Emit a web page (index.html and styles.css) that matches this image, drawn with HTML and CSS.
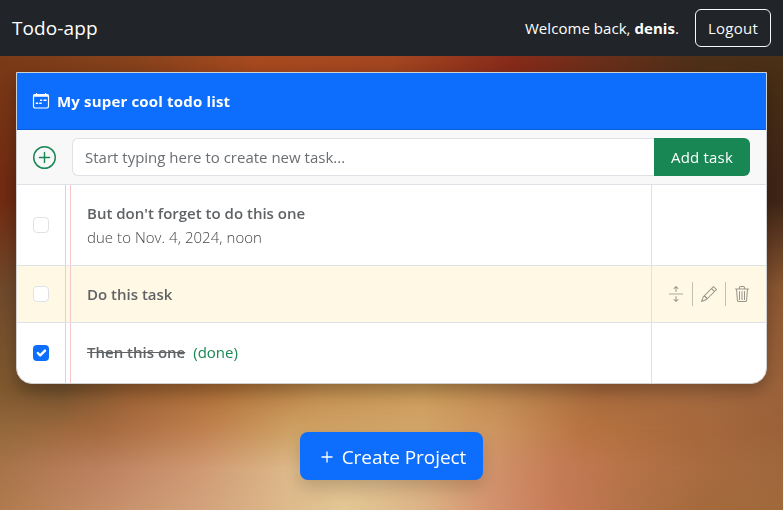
FILE: index.html
```html
<!DOCTYPE html>
<html lang="en">
<head>
<meta charset="utf-8">
<title>Todo-app</title>
<link rel="stylesheet" href="styles.css">
</head>
<body>
<div class="backdrop">
  <div class="band b1"></div>
  <div class="band b2"></div>
  <div class="band b3"></div>
  <div class="band b4"></div>
  <div class="band b5"></div>
  <div class="band b6"></div>
  <div class="band b7"></div>
</div>
<nav class="navbar">
  <a class="brand">Todo-app</a>
  <span class="welcome">Welcome back, <b>denis</b>.</span>
  <button class="logout">Logout</button>
</nav>
<main>
  <section class="card">
    <header class="card-head">
      <svg width="18" height="18" viewBox="0 0 18 18" fill="none" stroke="currentColor"><rect x="1.500" y="2.500" width="15" height="13.500" rx="1.700" stroke-width="1.200"/><path d="M1.500 3.700h15" stroke-width="2.200"/><path d="M4.500 1v2M13.500 1v2" stroke-width="1.200"/><path d="M8 8.200h2.200M11.500 8.200h3M3.800 11.200h2.400M7.200 11.200h2.500" stroke-width="1.500"/></svg>
      <h2>My super cool todo list</h2>
    </header>
    <form class="add-row">
      <svg width="23" height="23" viewBox="0 0 16 16" fill="currentColor"><path d="M8 15A7 7 0 1 1 8 1a7 7 0 0 1 0 14m0 1A8 8 0 1 0 8 0a8 8 0 0 0 0 16"/><path d="M8 4a.5.5 0 0 1 .5.5v3h3a.5.5 0 0 1 0 1h-3v3a.5.5 0 0 1-1 0v-3h-3a.5.5 0 0 1 0-1h3v-3A.5.5 0 0 1 8 4"/></svg>
      <input class="task-input" type="text" placeholder="Start typing here to create new task...">
      <button class="add-btn" type="button">Add task</button>
    </form>
    <div class="task tall">
      <div class="check-cell"><span class="check"></span></div>
      <div class="gutter"></div>
      <div class="body"><div class="name">But don't forget to do this one</div><div class="due">due to Nov. 4, 2024, noon</div></div>
      <div class="actions"></div>
    </div>
    <div class="task hover">
      <div class="check-cell"><span class="check"></span></div>
      <div class="gutter"></div>
      <div class="body"><div class="name">Do this task</div></div>
      <div class="actions">
        <svg width="16" height="16" viewBox="0 0 16 16" fill="currentColor"><path d="M8.354.146a.5.5 0 0 0-.708 0l-2 2a.5.5 0 1 0 .708.708L7.500 1.707V5.500a.5.5 0 0 0 1 0V1.707l1.146 1.147a.5.5 0 0 0 .708-.708zM8 10a.5.5 0 0 1 .5.5v3.793l1.146-1.147a.5.5 0 0 1 .708.708l-2 2a.5.5 0 0 1-.708 0l-2-2a.5.5 0 0 1 .708-.708L7.500 14.293V10.500A.5.5 0 0 1 8 10"/><path class="faint" d="M1 7h14v2H1z"/></svg>
        <i class="sep"></i>
        <svg width="16" height="16" viewBox="0 0 16 16" fill="currentColor"><path d="M12.146.146a.5.5 0 0 1 .708 0l3 3a.5.5 0 0 1 0 .708l-10 10a.5.5 0 0 1-.168.11l-5 2a.5.5 0 0 1-.65-.65l2-5a.5.5 0 0 1 .11-.168zM11.207 2.500 13.500 4.793 14.793 3.500 12.500 1.207zm1.586 3L10.500 3.207 4 9.707V10h.5a.5.5 0 0 1 .5.5v.5h.5a.5.5 0 0 1 .5.5v.5h.293zm-9.761 5.175-.106.106-1.528 3.821 3.821-1.528.106-.106A.5.5 0 0 1 5 12.500V12h-.5a.5.5 0 0 1-.5-.5V11h-.5a.5.5 0 0 1-.468-.325"/></svg>
        <i class="sep"></i>
        <svg width="16" height="16" viewBox="0 0 16 16" fill="currentColor"><path d="M6.500 1h3a.5.5 0 0 1 .5.5v1H6v-1a.5.5 0 0 1 .5-.5M11 2.500v-1A1.500 1.500 0 0 0 9.500 0h-3A1.500 1.500 0 0 0 5 1.500v1H1.500a.5.5 0 0 0 0 1h.538l.853 10.660A2 2 0 0 0 4.885 16h6.230a2 2 0 0 0 1.994-1.840l.853-10.660h.538a.5.5 0 0 0 0-1zm1.958 1-.846 10.580a1 1 0 0 1-.997.920h-6.230a1 1 0 0 1-.997-.920L3.042 3.500zM5.500 5a.5.5 0 0 1 .5.5v8a.5.5 0 0 1-1 0v-8a.5.5 0 0 1 .5-.5M8 5a.5.5 0 0 1 .5.5v8a.5.5 0 0 1-1 0v-8A.5.5 0 0 1 8 5m2.500 0a.5.5 0 0 1 .5.5v8a.5.5 0 0 1-1 0v-8a.5.5 0 0 1 .5-.5"/></svg>
      </div>
    </div>
    <div class="task last">
      <div class="check-cell"><span class="check on"><svg width="16" height="16" viewBox="0 0 20 20"><path fill="none" stroke="#fff" stroke-linecap="round" stroke-linejoin="round" stroke-width="3" d="m6 10 3 3 6-6"/></svg></span></div>
      <div class="gutter"></div>
      <div class="body"><div class="line"><s class="name">Then this one</s><span class="done">(done)</span></div></div>
      <div class="actions"></div>
    </div>
  </section>
  <button class="create"><svg width="12" height="12" viewBox="0 0 12 12"><path d="M6 .5v11M.5 6h11" stroke="#fff" stroke-width="1.300"/></svg><span>Create Project</span></button>
</main>
</body>
</html>
```
FILE: styles.css
```css
* { box-sizing: border-box; }
body {
  margin: 0;
  height: 510px;
  overflow: hidden;
  font-family: "Open Sans", "Noto Sans", sans-serif;
  font-size: 15px;
  line-height: 24px;
  color: #212529;
}
button, input { font: inherit; }
h2 { margin: 0; font: inherit; font-weight: 700; letter-spacing: .17px; }
svg { display: block; flex: none; }

/* Blurred wallpaper: horizontal colour bands, each fading into the one above */
.backdrop { position: fixed; inset: 0; z-index: -1; display: grid; }
.band {
  grid-area: 1 / 1;
  -webkit-mask-image: linear-gradient(transparent var(--from), #000 var(--to));
  mask-image: linear-gradient(transparent var(--from), #000 var(--to));
}
.b1 { --from: -2px; --to: -1px; background: linear-gradient(90deg, #7a3a18, #85421c 130px, #a84a20 260px, #a44721 390px, #882b1b 510px, #6a2f1a 600px, #4d3018 700px, #4a3016); }
.b2 { --from: 60px; --to: 180px; background: linear-gradient(90deg, #732c12, #5c2512 50px, #5c2512 700px, #3c2517); }
.b3 { --from: 200px; --to: 290px; background: linear-gradient(90deg, #6f4a2c, #7a4a28 50%, #8b5732); }
.b4 { --from: 290px; --to: 390px; background: linear-gradient(90deg, #80592f, #75532e 60px, #9a6032 130px, #b07038 220px, #c49050 320px, #cc9c58 420px, #bf8850 500px, #a86a3c 600px, #a56a40 700px, #9c623b); }
.b5 { --from: 390px; --to: 430px; background: linear-gradient(90deg, #94683c, #a5693f 100px, #c08050 200px, #cda062 290px, #d2a56a 420px, #cc935f 500px, #b87442 580px, #a96a3c 680px, #9c613a); }
.b6 { --from: 430px; --to: 470px; background: linear-gradient(90deg, #a8744a, #bd8160 100px, #cf9a74 200px, #ddb98a 290px, #dcb98a 380px, #d8a878 440px, #cf8f68 500px, #c47b56 560px, #b87448 620px, #a96c40 700px, #a0673c); }
.b7 { --from: 470px; --to: 510px; background: linear-gradient(90deg, #b07a4e, #c38d68 100px, #d2a27c 200px, #deba8c 290px, #e3c795 345px, #dcb488 420px, #d3926f 490px, #c67a56 560px, #b5734a 620px, #a46a3c 700px, #a0693b); }

.navbar {
  height: 56px;
  padding: 0 12px;
  display: flex;
  align-items: center;
  background: #212529;
  color: #fff;
}
.brand { margin-right: auto; font-size: 19px; line-height: 30px; letter-spacing: .1px; }
.welcome { margin-right: 16px; letter-spacing: .05px; }
.logout {
  width: 76px;
  height: 38px;
  padding: 0;
  border: 1px solid #f8f9fa;
  border-radius: 6px;
  background: none;
  color: #f8f9fa;
  letter-spacing: .25px;
}
main { padding: 16px; display: flex; flex-direction: column; align-items: center; }
.card {
  width: 751px;
  height: 312px;
  border: 1px solid #ced0d2;
  border-radius: 0 0 16px 16px;
  background: #fff;
  overflow: hidden;
  box-shadow: 0 8px 16px rgba(0, 0, 0, .25);
}
.card-head {
  height: 57px;
  padding: 0 15px;
  display: flex;
  align-items: center;
  gap: 7px;
  background: #0d6efd;
  border-bottom: 1px solid #0b5ed7;
  color: #fff;
}
.add-row {
  height: 55px;
  margin: 0;
  padding: 0 16px;
  display: flex;
  align-items: center;
  background: #f8f8f8;
  border-bottom: 1px solid #dee2e6;
  color: #198754;
}
.task-input {
  flex: 1;
  min-width: 0;
  height: 38px;
  margin-left: 16px;
  padding: 0 12px;
  border: 1px solid #dee2e6;
  border-right: 0;
  border-radius: 6px 0 0 6px;
  background: #fff;
}
.task-input::placeholder { color: #6a6e72; opacity: 1; }
.add-btn {
  width: 96px;
  height: 38px;
  padding: 0;
  border: 0;
  border-radius: 0 6px 6px 0;
  background: #198754;
  color: #fff;
  letter-spacing: .2px;
}
.task {
  height: 57px;
  display: grid;
  grid-template-columns: 49px 5px 1fr 114px;
  border-bottom: 1px solid #dee2e6;
}
.task.tall { height: 81px; }
.task.last { height: 60px; border-bottom: 0; }
.task.hover { background: #fff8e5; }
.check-cell { padding-left: 16px; display: flex; align-items: center; border-right: 1px solid #f5c6cb; }
.gutter { border-right: 1px solid #f5c6cb; }
.body {
  padding-left: 16px;
  display: flex;
  flex-direction: column;
  justify-content: center;
  border-right: 1px solid #dee2e6;
}
.name { font-weight: 600; color: #606366; }
.due { font-weight: 300; color: #44474a; letter-spacing: .04px; }
.line { display: flex; gap: 8px; padding-bottom: 3px; }
.done { color: #198754; }
.check { width: 16px; height: 16px; border: 1px solid #dee2e6; border-radius: 4px; background: #fff; }
.check.on { border: 0; background: #0d6efd; }
.actions { padding-left: 16px; display: flex; align-items: center; gap: 8px; color: #99958c; }
.faint { opacity: .4; }
.sep { width: 1px; height: 24px; background: #c4bfb3; }
.create {
  width: 183px;
  height: 48px;
  margin-top: 48px;
  padding: 2px 0 0 4px;
  display: flex;
  align-items: center;
  justify-content: center;
  gap: 9px;
  border: 0;
  border-radius: 8px;
  background: #0d6efd;
  color: #fff;
  font-size: 19px;
  letter-spacing: -.05px;
  box-shadow: 0 8px 16px rgba(0, 0, 0, .15);
}
```
